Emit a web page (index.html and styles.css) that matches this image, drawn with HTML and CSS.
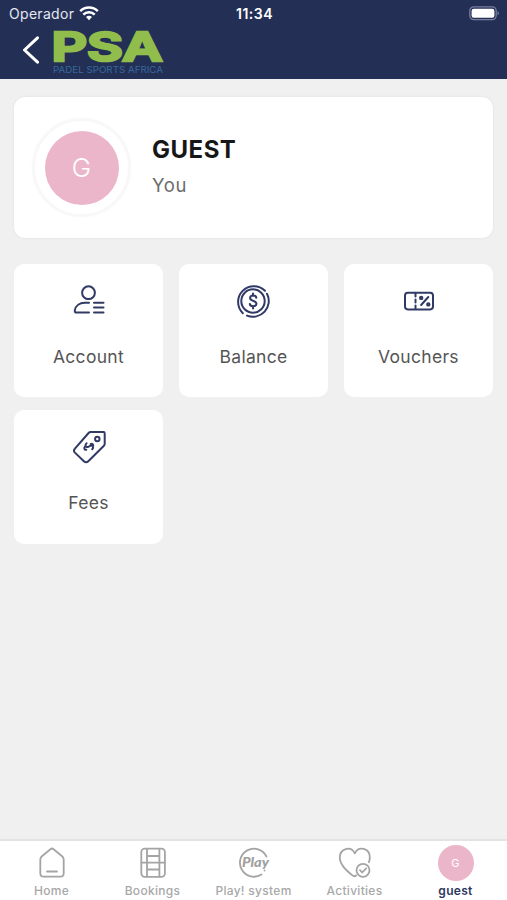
FILE: index.html
```html
<!DOCTYPE html>
<html lang="en">
<head>
<meta charset="utf-8">
<title>Guest profile</title>
<link rel="stylesheet" href="styles.css">
</head>
<body>
<div class="app">
  <header class="header">
    <div class="status">
      <div class="carrier"><span>Operador</span>
        <svg width="20" height="15" viewBox="0 0 20 15" fill="none" stroke="#fff" stroke-width="2.5"><path d="M1.2 5.2a12.4 12.4 0 0 1 17.6 0M4.3 8.6a8 8 0 0 1 11.4 0"/><path d="M10 14.2l-3-3.1a4.3 4.3 0 0 1 6 0z" fill="#fff" stroke="none"/></svg>
      </div>
      <time class="clock">11:34</time>
      <svg class="battery" width="31" height="15" viewBox="0 0 31 15"><rect x=".8" y=".8" width="26.4" height="12.8" rx="4" fill="none" stroke="#777d9d" stroke-width="1.3"/><rect x="2.6" y="2.7" width="22.8" height="9" rx="2.2" fill="#fff"/><path d="M28.5 5.2c2 .8 2 3.2 0 4z" fill="#777d9d"/></svg>
    </div>
    <div class="brand">
      <svg class="back" width="18" height="28" viewBox="0 0 18 28" fill="none" stroke="#fff" stroke-width="3" stroke-linecap="round" stroke-linejoin="round"><path d="M15.5 1.8L2.5 14l13 12.2"/></svg>
      <svg class="logo" width="114" height="50" viewBox="0 0 114 50"><text class="logo-main" x="-.5" y="33" textLength="111" lengthAdjust="spacingAndGlyphs">PSA</text><text class="logo-sub" x="1" y="45" textLength="110" lengthAdjust="spacingAndGlyphs">PADEL SPORTS AFRICA</text></svg>
    </div>
  </header>
  <main class="content">
    <section class="profile">
      <div class="ring"><div class="avatar">G</div></div>
      <div><h1 class="name">GUEST</h1><p class="role">You</p></div>
    </section>
    <nav class="tiles">
      <a class="tile"><svg class="icon" viewBox="0 0 36 36"><circle cx="17.5" cy="9.7" r="6.4"/><path d="M18 29.5H5.5q-2 0-1.7-2c.8-5 5-7.7 10-7.7h4.2M23 19.8h9.5M23 24.6h9.5M23 29.5h9.5"/></svg><span>Account</span></a>
      <a class="tile"><svg class="icon" viewBox="1 0 36 36"><circle cx="18" cy="18" r="11.7"/><path d="M7.8 30.2A15.8 15.8 0 1 1 30 7.7M32 10.7A15.8 15.8 0 0 1 12 32.6M21.3 14.8c-.3-3-6.2-3-6.2.2 0 3.4 6.3 2.4 6.3 5.8 0 3.2-6.3 3.2-6.6.1M18 10.5v2.2M18 23.2v2.3"/></svg><span>Balance</span></a>
      <a class="tile"><svg class="icon" viewBox="0 0 36 36"><rect x="4" y="9.7" width="28" height="16.7" rx="2.8"/><path d="M14.5 10v3.5M14.5 16.5v3M14.5 22.5v3.5M27.3 14l-7.2 8"/><circle cx="20.2" cy="14.9" r="1.2"/><circle cx="27.3" cy="21.4" r="1.2"/></svg><span>Vouchers</span></a>
      <a class="tile"><svg class="icon" viewBox="0 0 36 36"><path d="M19.5 3h13c.8 0 1.2.5 1.2 1.2v10.5c0 .8-.2 1.4-.8 2L17.3 32.2c-1.4 1.4-3 1.4-4.4 0l-9-8.6c-1.3-1.3-1.3-2.6 0-3.9L17.6 4c.6-.7 1.1-1 1.9-1z"/><circle cx="26.3" cy="10" r="2.2"/><path d="M15.6 14.2c-2.2 1.8-.6 4.7 1.6 3.6l2-1c2.3-1 4 1.4 2 3.5M14 17.5c-1.4 1.5-.6 3.7 1.3 3.3M19.6 15c1.4-.8 2.9.2 2.6 1.8"/></svg><span>Fees</span></a>
    </nav>
  </main>
  <nav class="tabs">
    <a class="tab"><svg viewBox="0 0 36 36"><path d="M6.3 14.5c0-1.4.5-2.4 1.6-3.3l8.5-7q1.6-1.4 3.2 0l8.5 7c1.1.9 1.6 1.9 1.6 3.3v13.7c0 2.3-1.3 3.5-3.5 3.5H9.8c-2.2 0-3.5-1.2-3.5-3.5zM13 26.5h10"/></svg><span>Home</span></a>
    <a class="tab"><svg viewBox="0 0 36 36"><rect x="6.3" y="3.6" width="23.6" height="28.2" rx="3.5"/><path d="M12 4v27.5M24.4 4v27.5M6.5 17.7h23.4M12 11h12.4M12 24.5h12.4"/></svg><span>Bookings</span></a>
    <a class="tab"><svg viewBox="0 0 36 36"><path d="M30.5 11.5A14 14 0 1 0 25.5 29.5M28.5 25.4v.2"/><text class="play" x="6" y="22" textLength="27" lengthAdjust="spacingAndGlyphs">Play</text></svg><span>Play! system</span></a>
    <a class="tab"><svg viewBox="0 0 36 36"><path d="M19.2 30.5c-1.2 1-2.6.9-3.8-.1C9 25 2.8 19.5 2.8 12.6c0-9 10.9-12.3 15-4.3 4-8 15-5 15 4.2 0 1.7-.3 3.2-.9 4.7"/><circle cx="26" cy="25.3" r="6.5"/><path d="M23 25.2l2.2 2.3 4-4.2"/></svg><span>Activities</span></a>
    <a class="tab active"><div class="mini">G</div><span>guest</span></a>
  </nav>
</div>
</body>
</html>
```
FILE: styles.css
```css
* { box-sizing: border-box; }
body { margin: 0; font-family: Inter, "Liberation Sans", sans-serif; }
.app { height: 900px; display: flex; flex-direction: column; background: #f0f0f0; overflow: hidden; }
.header { height: 79px; background: #242f56; color: #fff; flex: none; }
.status { height: 27px; display: grid; grid-template-columns: 1fr auto 1fr; align-items: center; padding: 0 7px 0 9px; font-size: 14px; }
.carrier { display: flex; align-items: center; gap: 5px; color: #e5e8f0; letter-spacing: .3px; }
.carrier svg { margin-top: -1px; }
.clock { font-weight: 600; letter-spacing: .5px; }
.battery { justify-self: end; }
.brand { display: flex; padding-left: 22px; padding-top: 1px; }
.back { margin-top: 8px; }
.logo { margin-left: 12px; overflow: visible; }
.logo-main { font: 600 39px Inter, sans-serif; fill: #91bd4c; stroke: #91bd4c; stroke-width: 2.6; }
.logo-sub { font: 400 9px Inter, sans-serif; fill: #34699b; }
.content { flex: 1; padding: 18px 14px 0; }
.profile { height: 141px; display: flex; align-items: center; gap: 21px; padding-left: 18px; background: #fff; border-radius: 11px; box-shadow: 0 0 2px #d9d9d9; }
.ring { width: 99px; height: 99px; border: 3px solid #f8f8f8; border-radius: 50%; display: grid; place-items: center; box-shadow: 0 0 3px #fafafa; }
.avatar { width: 74px; height: 74px; border-radius: 50%; background: #ecb6ca; color: #fff; display: grid; place-items: center; font-size: 26px; font-weight: 300; }
.name { margin: 0; color: #171717; font-size: 24px; line-height: 30px; font-weight: 700; letter-spacing: .5px; }
.role { margin: 7px 0 2px; color: #6c6c6c; font-size: 18.5px; line-height: 26px; font-weight: 400; letter-spacing: .6px; }
.tiles { display: grid; grid-template-columns: repeat(3, 149px); justify-content: space-between; row-gap: 13px; margin-top: 25.5px; }
.tile { height: 133.5px; border-radius: 10px; background: #fff; display: flex; flex-direction: column; align-items: center; padding-top: 19px; color: #555; font-size: 17.5px; letter-spacing: .3px; }
.icon { width: 36px; height: 36px; fill: none; stroke: #303a65; stroke-width: 2; stroke-linecap: round; stroke-linejoin: round; }
.tile span { line-height: 24px; margin-top: 26px; }
.tabs { height: 61px; flex: none; border-top: 2px solid #e3e3e3; background: #fff; display: grid; grid-template-columns: repeat(5, 101px); justify-content: center; }
.tab { display: flex; flex-direction: column; align-items: center; padding-top: 4px; color: #a8a8a8; font-size: 12px; font-weight: 500; letter-spacing: .3px; }
.tab svg, .mini { width: 36px; height: 36px; flex: none; }
.tab svg { fill: none; stroke: #a4a4a4; stroke-width: 1.8; stroke-linecap: round; stroke-linejoin: round; overflow: visible; }
.tab span { line-height: 16px; margin-top: 2px; white-space: nowrap; }
.tab .play { font: italic 900 13px Lato, sans-serif; fill: #a0a0a0; stroke: none; letter-spacing: 0; }
.mini { border-radius: 50%; background: #ecb6ca; color: #fff; display: grid; place-items: center; font-size: 11px; font-weight: 400; }
.active { color: #2d3861; font-weight: 600; }
```
